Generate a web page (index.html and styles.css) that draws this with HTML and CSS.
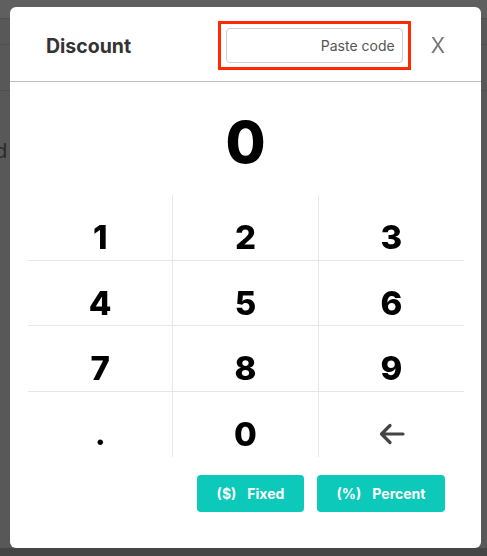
FILE: index.html
```html
<!DOCTYPE html>
<html>
<head>
    <meta charset="UTF-8">
    <title>Discount</title>
    <link rel="stylesheet" href="styles.css">
</head>
<body>
    <!-- Страница под затемнением -->
    <div class="page">
        <div class="page-row page-row-top"></div>
        <div class="page-row"></div>
        <div class="page-row page-row-mid"></div>
        <div class="page-line"><span class="page-text">d</span></div>
        <div class="page-footer"></div>
    </div>

    <!-- Модальное окно скидки -->
    <div class="modal">
        <div class="modal-header">
            <span class="modal-title">Discount</span>
            <div class="code-box">
                <input type="text" class="code-input" placeholder="Paste code">
            </div>
            <span class="modal-close">X</span>
        </div>

        <div class="display">0</div>

        <div class="keypad">
            <div class="key">1</div>
            <div class="key">2</div>
            <div class="key">3</div>
            <div class="key">4</div>
            <div class="key">5</div>
            <div class="key">6</div>
            <div class="key">7</div>
            <div class="key">8</div>
            <div class="key">9</div>
            <div class="key key-dot">.</div>
            <div class="key">0</div>
            <div class="key key-back">
                <svg width="27" height="24" viewBox="0 0 27 24">
                    <path d="M25 12H4M12 3.5L3.5 12L12 20.5" fill="none" stroke="#444" stroke-width="3.2" stroke-linecap="round" stroke-linejoin="round"/>
                </svg>
            </div>
        </div>

        <div class="actions">
            <button class="btn btn-fixed"><span>($)</span><span>Fixed</span></button>
            <button class="btn btn-percent"><span>(%)</span><span>Percent</span></button>
        </div>
    </div>
</body>
</html>
```

FILE: styles.css
```css
body {
    margin: 0;
    height: 556px;
    overflow: hidden;
    font-family: Inter, "Noto Sans", sans-serif;
    background: #585858;
}

.page {
    display: flex;
    flex-direction: column;
    height: 556px;
}

.page-row {
    height: 25px;
    border-bottom: 1px solid #4f4f4f;
}

.page-row-top {
    height: 18px;
    background: #5f5f5f;
}

.page-row-mid {
    height: 45px;
}

.page-line {
    height: 120px;
    display: flex;
    align-items: center;
}

.page-text {
    margin-left: -5px;
    font-size: 20px;
    color: #2a2a2a;
}

.page-footer {
    margin-top: auto;
    height: 8px;
    background: #454545;
}

.modal {
    position: fixed;
    top: 7px;
    left: 10px;
    width: 471px;
    height: 541px;
    background: #fff;
    border-radius: 6px;
    display: flex;
    flex-direction: column;
}

.modal-header {
    height: 71px;
    padding: 3px 36px 0;
    border-bottom: 1px solid #bdbdbd;
    display: flex;
    align-items: center;
}

.modal-title {
    font-size: 19.5px;
    font-weight: 700;
    color: #333;
}

.code-box {
    margin-left: auto;
    border: 3px solid #ff2a00;
    padding: 4px 5px;
}

.code-input {
    display: block;
    box-sizing: border-box;
    width: 177px;
    height: 35px;
    padding: 0 7px;
    border: 1px solid #cfcfcf;
    border-radius: 4px;
    font-family: inherit;
    font-size: 14px;
    text-align: right;
    outline: none;
}

.code-input::placeholder {
    color: #555;
}

.modal-close {
    margin-left: 20px;
    font-size: 21px;
    color: #777;
}

.display {
    height: 113px;
    display: flex;
    align-items: center;
    justify-content: center;
    padding-top: 6px;
    box-sizing: border-box;
    font-size: 58px;
    font-weight: 800;
    color: #000;
}

.keypad {
    margin: 0 17px 0 18px;
    display: grid;
    grid-template-columns: repeat(3, 1fr);
    grid-auto-rows: 65.5px;
}

.key {
    display: flex;
    align-items: center;
    justify-content: center;
    padding-top: 20px;
    box-sizing: border-box;
    font-size: 33px;
    font-weight: 800;
    color: #000;
    border-right: 1px solid #e6e6e6;
    border-bottom: 1px solid #e6e6e6;
}

.key:nth-child(3n) {
    border-right: none;
}

.key:nth-child(n+10) {
    border-bottom: none;
}

.key-dot {
    font-size: 30px;
}

.actions {
    display: flex;
    justify-content: flex-end;
    gap: 13px;
    margin: 18px 36px 0;
}

.btn {
    height: 37px;
    display: flex;
    align-items: center;
    justify-content: center;
    gap: 11px;
    background: #0cc9ba;
    color: white;
    border: none;
    border-radius: 4px;
    font-family: inherit;
    font-size: 14px;
    font-weight: 700;
    cursor: pointer;
}

.btn-fixed {
    width: 107px;
}

.btn-percent {
    width: 128px;
}
```
